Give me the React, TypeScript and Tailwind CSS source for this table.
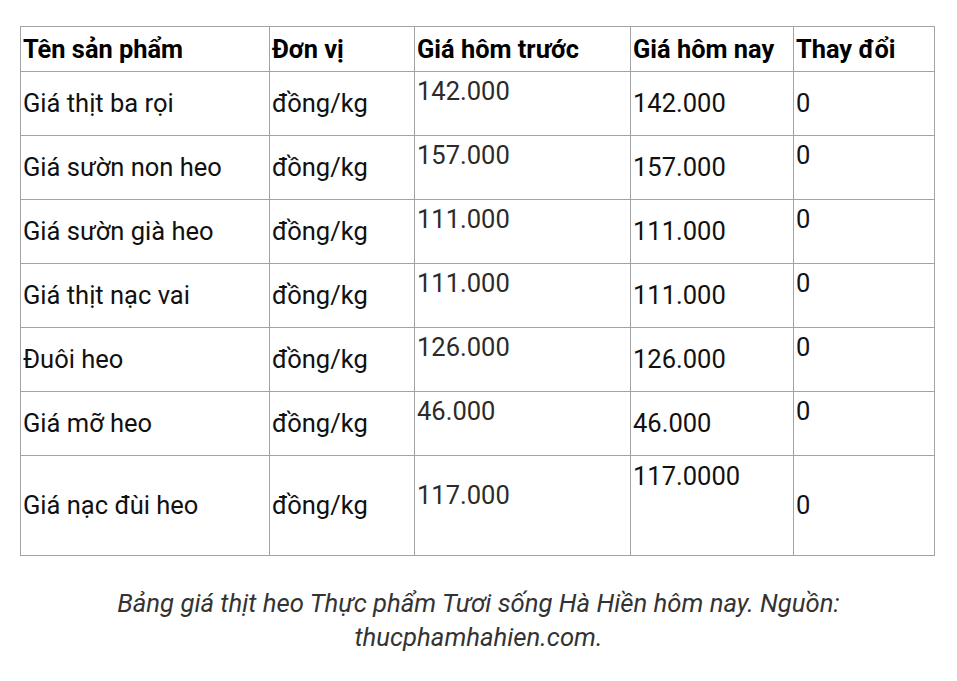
const rows = [
  { name: "Giá thịt ba rọi", prev: "142.000", today: "142.000", change: "0", changeTop: false },
  { name: "Giá sườn non heo", prev: "157.000", today: "157.000", change: "0", changeTop: true },
  { name: "Giá sườn già heo", prev: "111.000", today: "111.000", change: "0", changeTop: true },
  { name: "Giá thịt nạc vai", prev: "111.000", today: "111.000", change: "0", changeTop: true },
  { name: "Đuôi heo", prev: "126.000", today: "126.000", change: "0", changeTop: true },
  { name: "Giá mỡ heo", prev: "46.000", today: "46.000", change: "0", changeTop: true },
];

const cell = "border border-[#a3a3a3] pl-[2px] pr-[4px]";

export default function App() {
  return (
    <div className="w-[957px] h-[681px] bg-white font-['Roboto','Liberation_Sans',sans-serif] text-[#111]">
      <div className="pt-[26px] px-[20px]">
        <table className="w-[914px] border-collapse table-fixed text-[25.5px] leading-[29px]">
          <colgroup>
            <col className="w-[249px]" />
            <col className="w-[145px]" />
            <col className="w-[216px]" />
            <col className="w-[163px]" />
            <col className="w-[141px]" />
          </colgroup>
          <thead>
            <tr className="h-[45px]">
              {["Tên sản phẩm", "Đơn vị", "Giá hôm trước", "Giá hôm nay", "Thay đổi"].map((h) => (
                <th key={h} className={`${cell} text-left font-bold text-[25.4px] text-black align-middle`}>
                  {h}
                </th>
              ))}
            </tr>
          </thead>
          <tbody>
            {rows.map((r) => (
              <tr key={r.name} className="h-[64px]">
                <td className={`${cell} align-middle`}>{r.name}</td>
                <td className={`${cell} align-middle`}>đồng/kg</td>
                <td className={`${cell} align-top pt-[5px] text-[#2b2b2b]`}>{r.prev}</td>
                <td className={`${cell} align-middle`}>{r.today}</td>
                <td className={`${cell} ${r.changeTop ? "align-top pt-[5px]" : "align-middle"}`}>
                  {r.change}
                </td>
              </tr>
            ))}
            <tr className="h-[100px]">
              <td className={`${cell} align-middle`}>Giá nạc đùi heo</td>
              <td className={`${cell} align-middle`}>đồng/kg</td>
              <td className={`${cell} align-middle pb-[20px] text-[#2b2b2b]`}>117.000</td>
              <td className={`${cell} align-top pt-[6px]`}>117.0000</td>
              <td className={`${cell} align-middle`}>0</td>
            </tr>
          </tbody>
        </table>
      </div>
      <p className="mt-[30px] px-[60px] text-center italic text-[25.7px] leading-[34px] text-[#333]">
        Bảng giá thịt heo Thực phẩm Tươi sống Hà Hiền hôm nay. Nguồn: thucphamhahien.com.
      </p>
    </div>
  );
}
